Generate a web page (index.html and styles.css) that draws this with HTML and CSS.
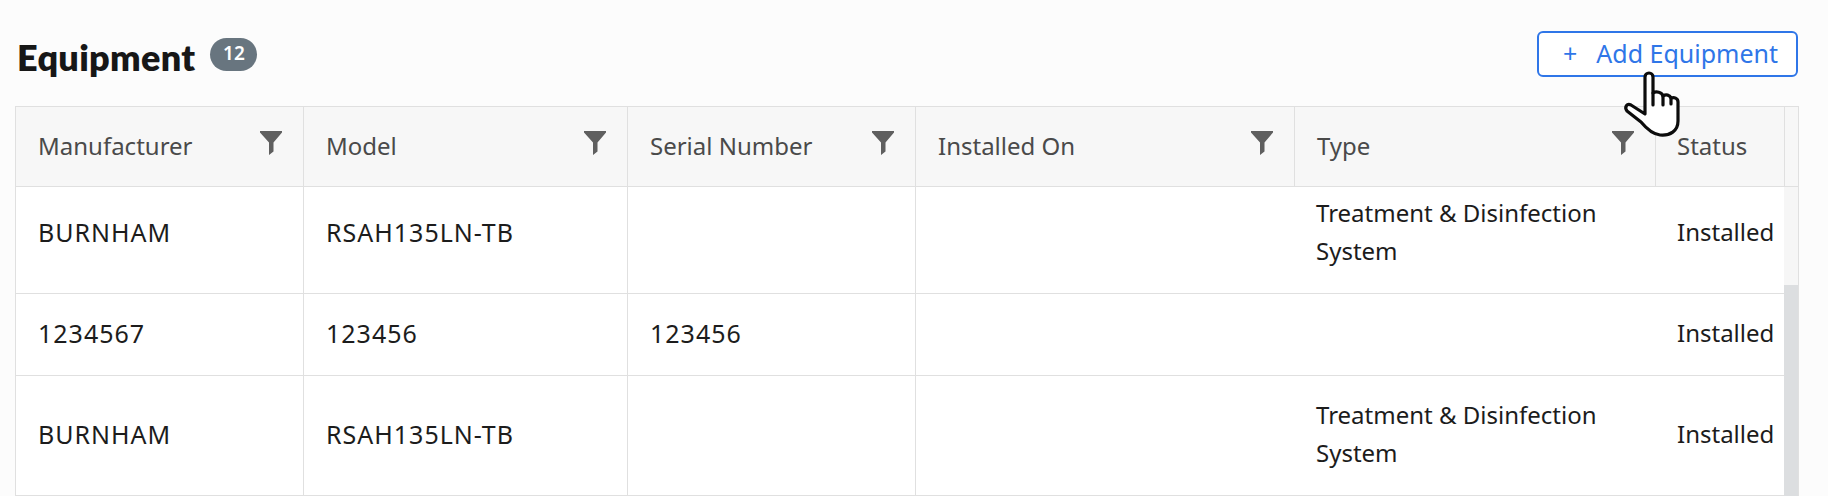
FILE: index.html
```html
<!DOCTYPE html>
<html lang="en">
<head>
    <meta charset="UTF-8">
    <title>Equipment</title>
    <link rel="stylesheet" href="styles.css">
</head>
<body>
    <div class="title-bar">
        <h1>Equipment</h1>
        <span class="badge">12</span>
        <button class="add-btn"><span class="plus">+</span>Add Equipment</button>
    </div>

    <div class="table">
        <div class="row head">
            <div class="cell col-man">Manufacturer
                <svg class="filter" viewBox="0 0 22 24"><path d="M0 0H22V1.5L13.5 11.5V20.5L9 24V11.5L0 1.5Z"/></svg>
            </div>
            <div class="cell col-model">Model
                <svg class="filter" viewBox="0 0 22 24"><path d="M0 0H22V1.5L13.5 11.5V20.5L9 24V11.5L0 1.5Z"/></svg>
            </div>
            <div class="cell col-serial">Serial Number
                <svg class="filter" viewBox="0 0 22 24"><path d="M0 0H22V1.5L13.5 11.5V20.5L9 24V11.5L0 1.5Z"/></svg>
            </div>
            <div class="cell col-date">Installed On
                <svg class="filter" viewBox="0 0 22 24"><path d="M0 0H22V1.5L13.5 11.5V20.5L9 24V11.5L0 1.5Z"/></svg>
            </div>
            <div class="cell col-type">Type
                <svg class="filter" viewBox="0 0 22 24"><path d="M0 0H22V1.5L13.5 11.5V20.5L9 24V11.5L0 1.5Z"/></svg>
            </div>
            <div class="cell col-status">Status</div>
            <div class="gutter"></div>
        </div>

        <div class="body">
            <div class="rows">
                <div class="row tall scrolled">
                    <div class="cell col-man code">BURNHAM</div>
                    <div class="cell col-model code">RSAH135LN-TB</div>
                    <div class="cell col-serial"></div>
                    <div class="cell col-date"></div>
                    <div class="cell col-type">Treatment &amp; Disinfection System</div>
                    <div class="cell col-status">Installed</div>
                </div>
                <div class="row short">
                    <div class="cell col-man code">1234567</div>
                    <div class="cell col-model code">123456</div>
                    <div class="cell col-serial code">123456</div>
                    <div class="cell col-date"></div>
                    <div class="cell col-type"></div>
                    <div class="cell col-status">Installed</div>
                </div>
                <div class="row tall">
                    <div class="cell col-man code">BURNHAM</div>
                    <div class="cell col-model code">RSAH135LN-TB</div>
                    <div class="cell col-serial"></div>
                    <div class="cell col-date"></div>
                    <div class="cell col-type">Treatment &amp; Disinfection System</div>
                    <div class="cell col-status">Installed</div>
                </div>
            </div>
            <div class="scrollbar"><div class="thumb"></div></div>
        </div>
    </div>

    <svg class="hand" viewBox="0 0 60 72">
        <path d="M23 45V8A4 4 0 0 1 31 8V24C34 22 40 23 41 27C44 25 48 26 49 29C52 28 56 29 56 33V52C56 62 48 67 38 66C30 65 24 59 19 53L5 42C2 38 5 34 9 36Z"/>
        <path d="M31 24V36M41 27V36M49 29V35"/>
    </svg>
</body>
</html>
```

FILE: styles.css
```css
* {
    margin: 0;
    padding: 0;
    box-sizing: border-box;
}

html, body {
    height: 496px;
    overflow: hidden;
}

body {
    background: #fcfcfc;
    font-family: 'Noto Sans', sans-serif;
    padding: 31px 29px 0 15px;
    position: relative;
}

.title-bar {
    display: flex;
    align-items: center;
    height: 46px;
    margin-bottom: 29px;
}

h1 {
    font-family: 'Lato', sans-serif;
    font-size: 36px;
    font-weight: 800;
    line-height: 46px;
    letter-spacing: 0.3px;
    color: #171717;
    margin: 6px 0 0 2px;
}

.badge {
    width: 47px;
    height: 33px;
    line-height: 31px;
    margin: 1px 0 0 15px;
    border-radius: 17px;
    background: #68757f;
    color: #fff;
    font-size: 19px;
    font-weight: 600;
    text-align: center;
}

.add-btn {
    margin-left: auto;
    margin-right: 1px;
    width: 261px;
    height: 46px;
    border: 2px solid #2f76e8;
    border-radius: 6px;
    background: #fff;
    color: #2f76e8;
    font: 400 25px 'Noto Sans', sans-serif;
    display: flex;
    align-items: center;
    padding: 0 0 3px 24px;
}

.plus {
    margin-right: 19px;
}

.table {
    border: 1px solid #e0e0e0;
    border-bottom: none;
}

.row {
    display: flex;
    border-bottom: 1px solid #e0e0e0;
    font-size: 24px;
    color: #1c1c1c;
    background: #fff;
}

.cell {
    display: flex;
    align-items: center;
    justify-content: space-between;
    padding: 0 21px 4px 22px;
    line-height: 38px;
    border-right: 1px solid #e0e0e0;
    flex: none;
}

.code {
    font-size: 25px;
    letter-spacing: 1px;
}

.col-man { width: 288px; }
.col-model { width: 324px; }
.col-serial { width: 288px; }
.col-date { width: 379px; }
.col-type { width: 361px; padding-left: 21px; }
.col-status { width: 129px; padding: 0 0 4px 21px; border-right: none; }

.head {
    height: 80px;
    background: #f7f7f7;
    color: #4a4a4a;
}

.head .cell { padding-bottom: 2px; }
.head .col-type { padding-left: 22px; }
.head .col-status { border-right: 1px solid #e0e0e0; }

.filter {
    width: 22px;
    height: 24px;
    fill: #5f5f5f;
    margin-top: -6px;
    flex: none;
}

.gutter {
    flex: 1;
}

.body {
    display: flex;
    overflow: hidden;
}

.rows {
    flex: 1;
    min-width: 0;
}

.tall { height: 120px; }
.short { height: 82px; }
.scrolled { margin-top: -13px; }

.tall .col-date, .tall .col-type, .short .col-date, .short .col-type {
    border-right: none;
}

.tall .col-type {
    padding-right: 40px;
}

.scrollbar {
    width: 14px;
    flex: none;
    background: #f6f6f6;
}

.thumb {
    height: 100%;
    margin-top: 98px;
    background: #dcdee0;
}

.hand {
    position: absolute;
    left: 1622px;
    top: 69px;
    width: 60px;
    height: 72px;
    fill: #fff;
    stroke: #0c0c0c;
    stroke-width: 3.2;
    stroke-linecap: round;
    stroke-linejoin: round;
}
```
